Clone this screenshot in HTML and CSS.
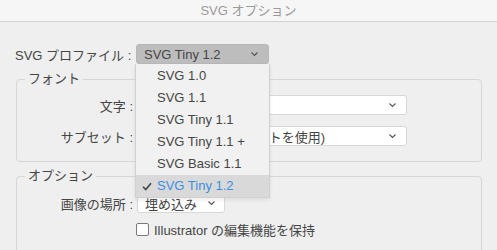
FILE: index.html
```html
<!DOCTYPE html>
<html lang="ja">
<head>
  <meta charset="UTF-8">
  <title>SVG オプション</title>
  <link rel="stylesheet" href="styles.css">
</head>
<body>
  <div class="dialog">
    <div class="titlebar">SVG オプション</div>

    <div class="content">
      <div class="row profile-row">
        <span class="label">SVG プロファイル :</span>
        <div class="select select-active">
          <span>SVG Tiny 1.2</span>
          <svg class="chev" width="9" height="6" viewBox="0 0 9 6"><path d="M1.5 1.5 L4.5 4.5 L7.5 1.5" fill="none" stroke="#555" stroke-width="1.1"/></svg>
        </div>
      </div>

      <fieldset class="group group-font">
        <legend>フォント</legend>
        <div class="row">
          <span class="label">文字 :</span>
          <div class="select select-wide">
            <span>Adobe CEF</span>
            <svg class="chev" width="9" height="6" viewBox="0 0 9 6"><path d="M1.5 1.5 L4.5 4.5 L7.5 1.5" fill="none" stroke="#555" stroke-width="1.1"/></svg>
          </div>
        </div>
        <div class="row">
          <span class="label">サブセット :</span>
          <div class="select select-wide">
            <span>なし (システムフォントを使用)</span>
            <svg class="chev" width="9" height="6" viewBox="0 0 9 6"><path d="M1.5 1.5 L4.5 4.5 L7.5 1.5" fill="none" stroke="#555" stroke-width="1.1"/></svg>
          </div>
        </div>
      </fieldset>

      <fieldset class="group group-options">
        <legend>オプション</legend>
        <div class="row">
          <span class="label">画像の場所 :</span>
          <div class="select select-small">
            <span>埋め込み</span>
            <svg class="chev" width="9" height="6" viewBox="0 0 9 6"><path d="M1.5 1.5 L4.5 4.5 L7.5 1.5" fill="none" stroke="#555" stroke-width="1.1"/></svg>
          </div>
        </div>
        <label class="check">
          <span class="box"></span>
          Illustrator の編集機能を保持
        </label>
      </fieldset>

      <!-- open popup menu of the profile select -->
      <ul class="menu">
        <li>SVG 1.0</li>
        <li>SVG 1.1</li>
        <li>SVG Tiny 1.1</li>
        <li>SVG Tiny 1.1 +</li>
        <li>SVG Basic 1.1</li>
        <li class="selected">
          <svg class="tick" width="10" height="9" viewBox="0 0 10 9"><path d="M1 4.8 L3.8 7.6 L9 1.2" fill="none" stroke="#444" stroke-width="1.6"/></svg>
          SVG Tiny 1.2
        </li>
      </ul>
    </div>
  </div>
</body>
</html>
```

FILE: styles.css
```css
* {
  margin: 0;
  padding: 0;
  box-sizing: border-box;
}

body {
  font-family: "Liberation Sans", "Noto Sans CJK JP", sans-serif;
  font-size: 13px;
  color: #454545;
  background: #efefef;
  width: 497px;
  height: 250px;
  overflow: hidden;
}

.dialog {
  height: 250px;
}

.titlebar {
  height: 22px;
  line-height: 21px;
  text-align: center;
  color: #9a9a9a;
  background: #f6f6f6;
  border-bottom: 1px solid #d2d2d2;
}

.content {
  position: relative;
  padding: 22px 15px 0 16px;
}

.row {
  display: flex;
  align-items: center;
  height: 20px;
}

.label {
  width: 120px;
  text-align: right;
  white-space: nowrap;
  padding-right: 4px;
}

.profile-row {
  margin-left: -1px;
}

.profile-row .label {
  width: 121px;
  text-align: left;
}

.select {
  display: flex;
  align-items: center;
  justify-content: space-between;
  height: 20px;
  padding: 0 9px 0 7px;
  border: 1px solid #d8d8d8;
  border-radius: 3px;
  background: #fff;
  white-space: nowrap;
  overflow: hidden;
}

.select-active {
  width: 133px;
  background: #bdbdbd;
  border-color: #b8b8b8;
}

.select-wide {
  width: 270px;
}

.select-small {
  width: 88px;
  padding-right: 8px;
}

.chev {
  flex: none;
}

.group {
  border: 1px solid #d6d6d6;
  border-radius: 4px;
}

.group legend {
  margin-left: 8px;
  padding: 0 3px;
  line-height: 14px;
}

.group-font {
  margin-top: 8px;
  height: 90px;
  padding-top: 9px;
}

.group-font .row + .row {
  margin-top: 11px;
}

.group-options {
  margin-top: 7px;
  height: 90px;
  padding-top: 10px;
}

.check {
  display: flex;
  align-items: center;
  gap: 5px;
  margin: 7px 0 0 119px;
}

.box {
  width: 13px;
  height: 13px;
  border: 1px solid #7a7a7a;
  border-radius: 2px;
  background: #fff;
}

.menu {
  position: absolute;
  left: 135px;
  top: 42px;
  width: 135px;
  list-style: none;
  background: #f1f1f1;
  border: 1px solid #d0d0d0;
  border-top: none;
  box-shadow: 0 2px 4px rgba(0, 0, 0, 0.08);
  padding-top: 1px;
}

.menu li {
  position: relative;
  height: 22px;
  line-height: 22px;
  padding-left: 21px;
  white-space: nowrap;
}

.menu li.selected {
  background: #d9d9d9;
  color: #3b8fe0;
}

.tick {
  position: absolute;
  left: 6px;
  top: 7px;
}
```
